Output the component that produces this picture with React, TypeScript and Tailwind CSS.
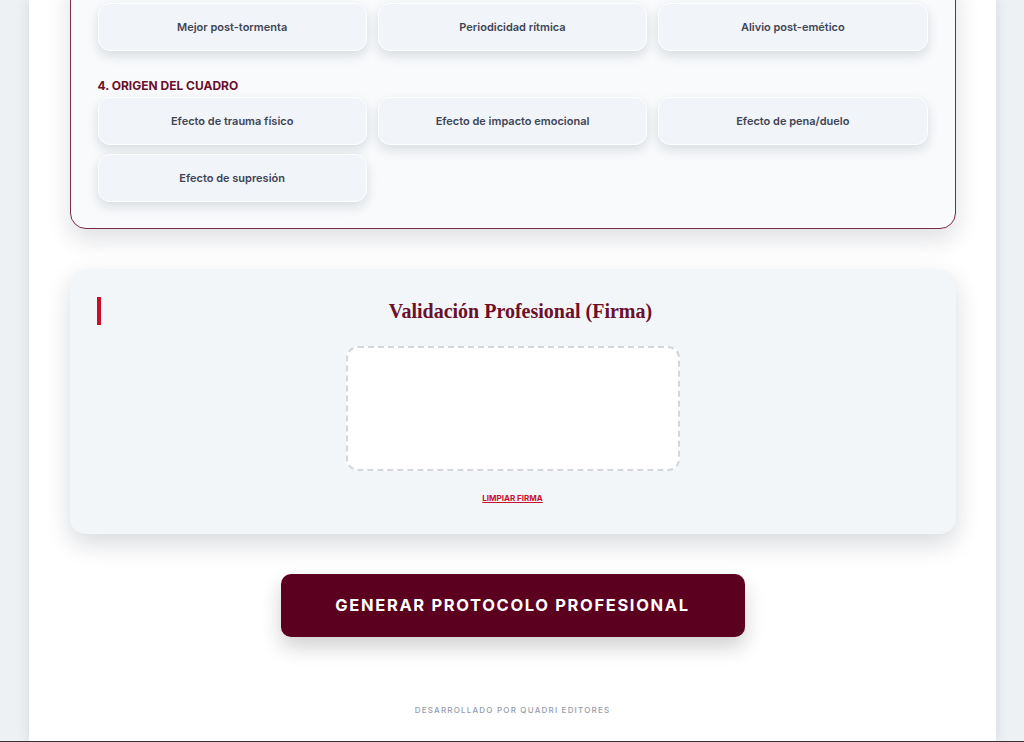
const rowOne = ["Mejor post-tormenta", "Periodicidad rítmica", "Alivio post-emético"];
const origen = [
  "Efecto de trauma físico",
  "Efecto de impacto emocional",
  "Efecto de pena/duelo",
  "Efecto de supresión",
];

function Opcion({ label }: { label: string }) {
  return (
    <button className="h-[48px] rounded-xl border border-white bg-[#f1f4f8] text-[11px] font-semibold text-[#3e4555] shadow-[0_5px_12px_rgba(15,23,42,0.13)]">
      {label}
    </button>
  );
}

export default function App() {
  return (
    <div
      className="h-[742px] overflow-hidden bg-[#eef1f4]"
      style={{ fontFamily: "Inter, 'Liberation Sans', sans-serif" }}
    >
      <main className="mx-auto flex h-[741px] w-[967px] flex-col bg-white px-[41px] pr-[40px] shadow-[0_0_12px_rgba(15,23,42,0.12)]">
        {/* bloque de sintomas */}
        <section className="-mt-[25px] rounded-2xl border border-[#7a2c47] bg-[#f8fafc] px-[27px] pb-[26px] pt-[27px] shadow-[0_10px_24px_rgba(15,23,42,0.14)]">
          <div className="grid grid-cols-3 gap-[11px]">
            {rowOne.map((l) => (
              <Opcion key={l} label={l} />
            ))}
          </div>
          <h3 className="mt-[28px] mb-[4px] text-[12px] leading-[14px] font-bold text-[#6b0f2a]">
            4. ORIGEN DEL CUADRO
          </h3>
          <div className="grid grid-cols-3 gap-x-[11px] gap-y-[9px]">
            {origen.map((l) => (
              <Opcion key={l} label={l} />
            ))}
          </div>
        </section>

        {/* firma */}
        <section className="mt-[40px] rounded-2xl bg-[#f3f6f9] px-[27px] pt-[28px] pb-[30px] shadow-[0_10px_24px_rgba(15,23,42,0.16)]">
          <div className="flex items-center gap-3">
            <span className="h-[28px] w-1 bg-[#c8102e]" />
            <h2
              className="flex-1 text-center text-[20px] leading-[28px] font-bold text-[#6b0f2a]"
              style={{ fontFamily: "'Liberation Serif', 'DejaVu Serif', serif" }}
            >
              Validación Profesional (Firma)
            </h2>
          </div>
          <div className="mx-auto mt-[21px] h-[125px] w-[334px] rounded-xl border-2 border-dashed border-[#d4d6da] bg-white" />
          <div className="mt-[21px] flex justify-center">
            <button className="text-[8px] leading-[12px] font-bold text-[#c8102e] underline">
              LIMPIAR FIRMA
            </button>
          </div>
        </section>

        <div className="mt-[40px] flex justify-center">
          <button className="h-[63px] w-[464px] rounded-[10px] bg-[#5c0020] text-[16.5px] font-bold tracking-[0.1em] text-white shadow-[0_10px_20px_rgba(30,20,30,0.2)]">
            GENERAR PROTOCOLO PROFESIONAL
          </button>
        </div>

        <p className="mt-[67px] text-center text-[8px] font-medium tracking-[0.15em] text-[#959cab]">
          DESARROLLADO POR QUADRI EDITORES
        </p>
      </main>
      <div className="h-px bg-[#333]" />
    </div>
  );
}
